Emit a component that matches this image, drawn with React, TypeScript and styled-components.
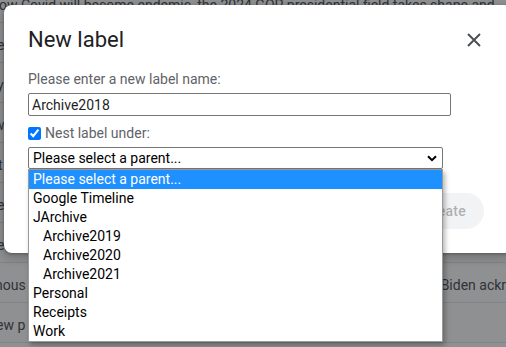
import React from "react";
import styled, { createGlobalStyle } from "styled-components";

const GlobalStyle = createGlobalStyle`
  html, body { margin: 0; padding: 0; }
  body {
    width: 506px;
    height: 347px;
    overflow: hidden;
    background: #fff;
    font-family: Roboto, "Liberation Sans", Arial, sans-serif;
  }
`;

const Page = styled.div`
  position: relative;
  width: 506px;
  height: 347px;
  overflow: hidden;
`;

const MailList = styled.div`
  margin-top: -17px;
  display: flex;
  flex-direction: column;
`;

const MailRow = styled.div`
  height: 40px;
  box-sizing: border-box;
  border-bottom: 1px solid #e4e4e4;
  display: flex;
  align-items: center;
  padding-top: 4px;
  white-space: nowrap;
  overflow: hidden;
  font-size: 14px;
  color: #40444a;
`;

const Lead = styled.span<{ $shift: number }>`
  margin-left: ${(p) => p.$shift}px;
  flex: none;
`;

const Tail = styled.span<{ $gap: number }>`
  margin-left: ${(p) => p.$gap}px;
  flex: none;
`;

const Overlay = styled.div`
  position: absolute;
  inset: 0;
  background: rgba(32, 33, 36, 0.5);
`;

const Dialog = styled.div`
  position: absolute;
  left: 4px;
  top: 5px;
  width: 508px;
  box-sizing: border-box;
  padding: 21px 24px 24px;
  background: #fff;
  border-radius: 8px;
  box-shadow: 0 4px 8px 3px rgba(0, 0, 0, 0.15), 0 1px 3px rgba(0, 0, 0, 0.3);
  display: flex;
  flex-direction: column;
`;

const Header = styled.div`
  display: flex;
  align-items: center;
  justify-content: space-between;
`;

const Title = styled.h2`
  margin: 0;
  font-size: 22px;
  line-height: 28px;
  font-weight: 400;
  color: #202124;
`;

const CloseButton = styled.button`
  width: 24px;
  height: 24px;
  margin-right: 2px;
  padding: 0;
  border: 0;
  background: transparent;
  display: flex;
  align-items: center;
  justify-content: center;
  color: #4a4d51;
`;

const FieldLabel = styled.div`
  margin-top: 15px;
  font-size: 14px;
  line-height: 20px;
  color: #5f6368;
`;

const TextInput = styled.input`
  margin: 4px 0 0;
  width: 423px;
  height: 23px;
  box-sizing: border-box;
  border: 1px solid #767676;
  border-radius: 2px;
  padding: 0 3px;
  font-family: Roboto, "Liberation Sans", Arial, sans-serif;
  font-size: 14px;
  color: #1f1f1f;
  outline: none;
`;

const CheckRow = styled.label`
  margin-top: 7px;
  display: flex;
  align-items: center;
  font-size: 14px;
  line-height: 20px;
  color: #5f6368;
`;

const CheckBox = styled.input`
  width: 13px;
  height: 13px;
  margin: 0 4px 0 0;
  accent-color: #0075ff;
`;

const SelectWrap = styled.div`
  position: relative;
  margin-top: 4px;
  width: 415px;
`;

const SelectBox = styled.div`
  height: 22px;
  box-sizing: border-box;
  border: 1px solid #767676;
  border-radius: 2px;
  padding: 0 5px 0 4px;
  display: flex;
  align-items: center;
  justify-content: space-between;
  font-size: 14px;
  line-height: 19px;
  color: #000;
  background: #fff;
`;

const DropList = styled.div`
  position: absolute;
  left: 0;
  right: 0;
  top: 100%;
  z-index: 2;
  background: #fff;
  border: 1px solid #9a9a9a;
  box-shadow: 2px 3px 5px rgba(0, 0, 0, 0.3);
  display: flex;
  flex-direction: column;
`;

const Option = styled.div<{ $active?: boolean; $indent?: boolean }>`
  height: 19px;
  line-height: 19px;
  font-size: 14px;
  padding-left: ${(p) => (p.$indent ? 14 : 4)}px;
  background: ${(p) => (p.$active ? "#1e90ff" : "transparent")};
  color: ${(p) => (p.$active ? "#fff" : "#000")};
  white-space: nowrap;
`;

const Footer = styled.div`
  margin-top: 24px;
  padding-right: 4px;
  display: flex;
  justify-content: flex-end;
  gap: 8px;
`;

const FooterButton = styled.button<{ $primary?: boolean }>`
  height: 36px;
  padding: 0 18px;
  border: 0;
  border-radius: 18px;
  font-family: Roboto, "Liberation Sans", Arial, sans-serif;
  font-size: 14px;
  font-weight: 500;
  letter-spacing: 0.25px;
  background: ${(p) => (p.$primary ? "#f1f3f4" : "transparent")};
  color: ${(p) => (p.$primary ? "rgba(60, 64, 67, 0.38)" : "#0b57d0")};
`;

const rows: { lead: string; shift: number; tail?: string; gap?: number }[] = [
  { lead: "ow Covid will become endemic, the 2024 GOP presidential field takes shape and", shift: -1 },
  { lead: "e", shift: -3 },
  { lead: "y", shift: -3 },
  { lead: "w", shift: -6 },
  { lead: "t", shift: -2 },
  { lead: "e", shift: -3 },
  { lead: "e", shift: -3 },
  { lead: "hous", shift: -5, tail: "Biden acknowledges", gap: 415 },
  { lead: "ew p", shift: -4 },
  { lead: "", shift: 0 },
];

const options: { text: string; indent?: boolean }[] = [
  { text: "Please select a parent..." },
  { text: "Google Timeline" },
  { text: "JArchive" },
  { text: "Archive2019", indent: true },
  { text: "Archive2020", indent: true },
  { text: "Archive2021", indent: true },
  { text: "Personal" },
  { text: "Receipts" },
  { text: "Work" },
];

export default function App() {
  return (
    <Page>
      <GlobalStyle />
      <MailList>
        {rows.map((r, i) => (
          <MailRow key={i}>
            <Lead $shift={r.shift}>{r.lead}</Lead>
            {r.tail && <Tail $gap={r.gap ?? 0}>{r.tail}</Tail>}
          </MailRow>
        ))}
      </MailList>
      <Overlay />
      <Dialog>
        <Header>
          <Title>New label</Title>
          <CloseButton aria-label="Close">
            <svg width="14" height="14" viewBox="0 0 14 14">
              <path d="M1 1L13 13M13 1L1 13" stroke="currentColor" strokeWidth="1.9" fill="none" />
            </svg>
          </CloseButton>
        </Header>
        <FieldLabel>Please enter a new label name:</FieldLabel>
        <TextInput value="Archive2018" readOnly />
        <CheckRow>
          <CheckBox type="checkbox" checked readOnly />
          Nest label under:
        </CheckRow>
        <SelectWrap>
          <SelectBox>
            <span>Please select a parent...</span>
            <svg width="10" height="7" viewBox="0 0 10 7">
              <path d="M1 1.2L5 5.2L9 1.2" stroke="#000" strokeWidth="2" fill="none" />
            </svg>
          </SelectBox>
          <DropList>
            {options.map((o, i) => (
              <Option key={o.text} $active={i === 0} $indent={o.indent}>
                {o.text}
              </Option>
            ))}
          </DropList>
        </SelectWrap>
        <Footer>
          <FooterButton>Cancel</FooterButton>
          <FooterButton $primary>Create</FooterButton>
        </Footer>
      </Dialog>
    </Page>
  );
}
